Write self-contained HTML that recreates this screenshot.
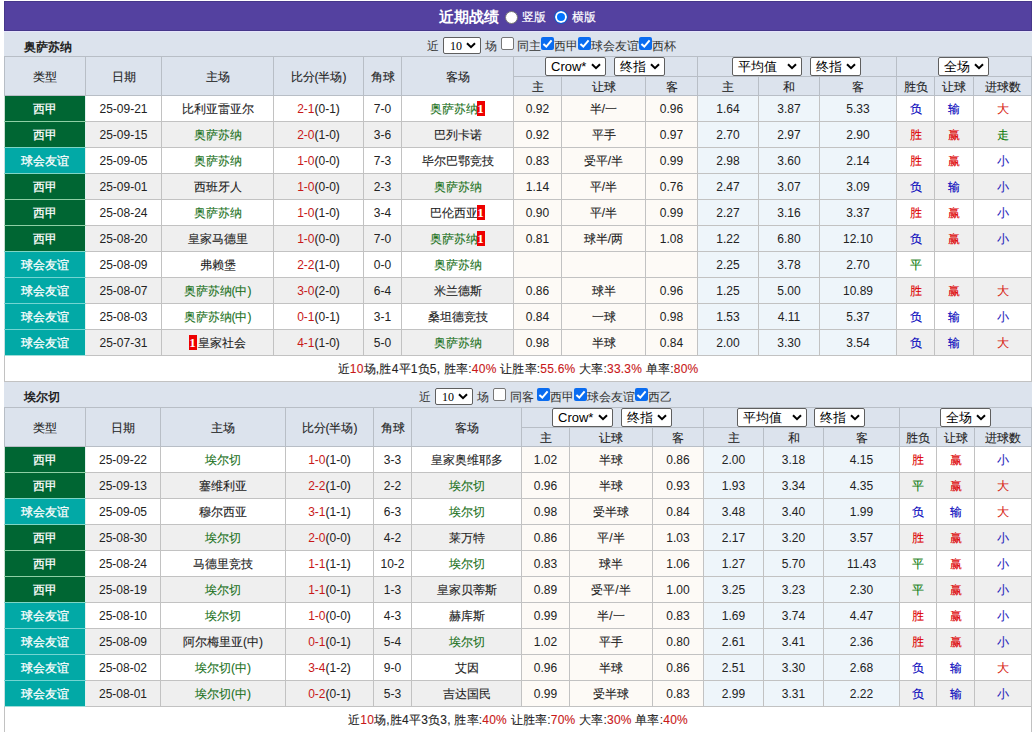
<!DOCTYPE html>
<html><head><meta charset="utf-8"><style>
*{box-sizing:border-box}
html,body{margin:0;padding:0;background:#fff;width:1036px;height:732px;overflow:hidden;position:relative;font-family:"Liberation Sans",sans-serif;font-size:12px;color:#222}
.title{position:absolute;z-index:2;left:4px;top:1px;width:1028px;height:30px;background:#5441a0;border:1px solid #46388a;color:#fff;white-space:nowrap}
.title:after{content:"";position:absolute;left:-1px;right:-1px;top:29px;height:1px;background:#e6e4fb}
.tt{position:absolute;left:434px;top:6px;font-weight:bold;font-size:15px;line-height:18px}
.rd{position:absolute;top:9px;width:13px;height:13px;border-radius:50%;background:#fff;border:1px solid #777}
.rd.r1{left:500px}
.rd.r2{left:549px;width:14px;height:14px;top:8px;background:#0075ff;border:1px solid #1158c8;box-shadow:inset 0 0 0 2px #fff}
.rl{position:absolute;top:8px;font-size:12px;line-height:15px;-webkit-text-stroke:0.2px #fff}
.rl.l1{left:517px}
.rl.l2{left:567px}
.bar{position:absolute;left:4px;width:1028px;height:26px;background:#dce3ed}
.tn{position:absolute;left:20px;top:10px;font-weight:bold;font-size:12px;line-height:13px;color:#222}
.ct{position:absolute;font-size:12px;line-height:14px;color:#333;white-space:nowrap}
.cb{position:absolute;width:13px;height:13px;border:1px solid #767676;border-radius:2px;background:#fff}
.cb.on{background:#0a6cf0;border-color:#0a6cf0}
.cb.on{border:0}.cb svg{position:absolute;left:0;top:0}
.s{position:absolute;border:1px solid #6f6f6f;border-radius:2px;background:#fff;font-size:13px;line-height:18px;text-align:left;padding-left:5px;color:#000;white-space:nowrap;border-color:#5f5f5f}
.s .chev{position:absolute;right:4px;top:5px}
.s5{font-family:"Liberation Serif",serif;font-size:12px;line-height:15px;padding-left:6px;padding-top:1px}
.s5 .chev{top:4px}
table.t{position:absolute;left:4px;width:1027px;border-collapse:collapse;table-layout:fixed}
.t td,.t th{border:1px solid #c2c2c2;text-align:center;padding:0;font-weight:normal;white-space:nowrap;overflow:hidden}
.t th{background:#dce3ed;color:#222;border-color:#b8bec6}
.t tr.h1{height:20px}
.t tr.h2{height:19px}
.t tr.od,.t tr.ev{height:26px}
.t tr.od td,.t tr.ev td{padding-top:1px}
.t tr.od td{background:#fff}
.t tr.ev td{background:#efefef}
.t td.xj{background:#006633!important;color:#fff;border-right-color:#e0f2ef;border-left-color:#c8dcd0}
.t td.yy{background:#02a9a6!important;color:#fff;border-right-color:#e0f2ef;border-left-color:#c8e0e0}
.t td.cr{background:#fdfaf6!important}
.t td.av{background:#eef5fa!important}
.t td.win{color:#dd0000}
.t td.lose{color:#0000bb}
.t td.draw{color:#0a7a0a}
.t td.big{color:#d81a10}
.t td.small{color:#2222bb}
.gt{color:#187018}
.sc{color:#c81818}
.rc{display:inline-block;background:#e00;color:#fff;font-weight:bold;width:8px;height:15px;line-height:15px;font-size:13px;text-align:center;vertical-align:middle;font-family:"Liberation Serif",serif;position:relative;left:-1px;top:-1px}
.t tr.sum{height:26px}
.t tr.sum td{background:#fff;padding-top:1px}
em{font-style:normal;color:#c81818}
.t td{-webkit-text-stroke:0.1px currentColor}
.n{font-style:normal;-webkit-text-stroke:0}
.t tr.sum td{letter-spacing:0.22px}
.t tr.h2 th{padding-top:2px}
.t tr.h1 th[rowspan]{padding-top:2px}
.t th{-webkit-text-stroke:0.1px currentColor;line-height:15px}
.t td.xj,.t td.yy{-webkit-text-stroke:0.25px #fff}

</style></head><body>
<div class="title"><span class="tt">近期战绩</span><span class="rd r1"></span><span class="rl l1">竖版</span><span class="rd r2"></span><span class="rl l2">横版</span></div>
<div class="bar" style="top:31px"><span class="tn">奥萨苏纳</span></div>
<span class="ct" style="left:427px;top:39px">近</span>
<span class="s s5" style="left:443px;top:37px;width:38px;height:17px">10<svg class="chev" width="10" height="7" viewBox="0 0 10 7"><path d="M1 1.2 L5 5.2 L9 1.2" fill="none" stroke="#000" stroke-width="2"/></svg></span>
<span class="ct" style="left:485px;top:39px">场</span>
<span class="cb" style="left:501px;top:37px"></span>
<span class="ct" style="left:517px;top:39px">同主</span>
<span class="cb on" style="left:541px;top:37px"><svg width="13" height="13" viewBox="0 0 13 13"><path d="M2.4 7 L5.3 9.6 L10.6 3.4" fill="none" stroke="#fff" stroke-width="2"/></svg></span>
<span class="ct" style="left:554px;top:39px">西甲</span>
<span class="cb on" style="left:578px;top:37px"><svg width="13" height="13" viewBox="0 0 13 13"><path d="M2.4 7 L5.3 9.6 L10.6 3.4" fill="none" stroke="#fff" stroke-width="2"/></svg></span>
<span class="ct" style="left:591px;top:39px">球会友谊</span>
<span class="cb on" style="left:639px;top:37px"><svg width="13" height="13" viewBox="0 0 13 13"><path d="M2.4 7 L5.3 9.6 L10.6 3.4" fill="none" stroke="#fff" stroke-width="2"/></svg></span>
<span class="ct" style="left:652px;top:39px">西杯</span>
<table class="t" style="top:56px">
<colgroup><col style="width:81px"><col style="width:76px"><col style="width:112px"><col style="width:90px"><col style="width:38px"><col style="width:112px"><col style="width:48px"><col style="width:84px"><col style="width:52px"><col style="width:61px"><col style="width:61px"><col style="width:77px"><col style="width:38px"><col style="width:39px"><col style="width:58px"></colgroup>
<tr class="h1"><th rowspan="2">类型</th><th rowspan="2">日期</th><th rowspan="2">主场</th><th rowspan="2">比分(半场)</th><th rowspan="2">角球</th><th rowspan="2">客场</th><th colspan="3"></th><th colspan="3"></th><th colspan="3"></th></tr>
<tr class="h2"><th>主</th><th>让球</th><th>客</th><th>主</th><th>和</th><th>客</th><th>胜负</th><th>让球</th><th>进球数</th></tr>
<tr class="od"><td class="xj" style="border-bottom-color:#8fcfa5">西甲</td><td><i class="n">25-09-21</i></td><td>比利亚雷亚尔</td><td><span class="sc"><i class="n">2-1</i></span>(<i class="n">0-1</i>)</td><td><i class="n">7-0</i></td><td><span class="gt">奥萨苏纳<b class="rc"><i class="n">1</i></b></span></td><td class="cr"><i class="n">0.92</i></td><td class="cr">半/一</td><td class="cr"><i class="n">0.96</i></td><td class="av"><i class="n">1.64</i></td><td class="av"><i class="n">3.87</i></td><td class="av"><i class="n">5.33</i></td><td class="lose">负</td><td class="lose">输</td><td class="big">大</td></tr>
<tr class="ev"><td class="xj" style="border-bottom-color:#7fd5c5">西甲</td><td><i class="n">25-09-15</i></td><td><span class="gt">奥萨苏纳</span></td><td><span class="sc"><i class="n">2-0</i></span>(<i class="n">1-0</i>)</td><td><i class="n">3-6</i></td><td>巴列卡诺</td><td class="cr"><i class="n">0.92</i></td><td class="cr">平手</td><td class="cr"><i class="n">0.97</i></td><td class="av"><i class="n">2.70</i></td><td class="av"><i class="n">2.97</i></td><td class="av"><i class="n">2.90</i></td><td class="win">胜</td><td class="win">赢</td><td class="draw">走</td></tr>
<tr class="od"><td class="yy" style="border-bottom-color:#7fd5c5">球会友谊</td><td><i class="n">25-09-05</i></td><td><span class="gt">奥萨苏纳</span></td><td><span class="sc"><i class="n">1-0</i></span>(<i class="n">0-0</i>)</td><td><i class="n">7-3</i></td><td>毕尔巴鄂竞技</td><td class="cr"><i class="n">0.83</i></td><td class="cr">受平/半</td><td class="cr"><i class="n">0.99</i></td><td class="av"><i class="n">2.98</i></td><td class="av"><i class="n">3.60</i></td><td class="av"><i class="n">2.14</i></td><td class="win">胜</td><td class="win">赢</td><td class="small">小</td></tr>
<tr class="ev"><td class="xj" style="border-bottom-color:#8fcfa5">西甲</td><td><i class="n">25-09-01</i></td><td>西班牙人</td><td><span class="sc"><i class="n">1-0</i></span>(<i class="n">0-0</i>)</td><td><i class="n">2-3</i></td><td><span class="gt">奥萨苏纳</span></td><td class="cr"><i class="n">1.14</i></td><td class="cr">平/半</td><td class="cr"><i class="n">0.76</i></td><td class="av"><i class="n">2.47</i></td><td class="av"><i class="n">3.07</i></td><td class="av"><i class="n">3.09</i></td><td class="lose">负</td><td class="lose">输</td><td class="small">小</td></tr>
<tr class="od"><td class="xj" style="border-bottom-color:#8fcfa5">西甲</td><td><i class="n">25-08-24</i></td><td><span class="gt">奥萨苏纳</span></td><td><span class="sc"><i class="n">1-0</i></span>(<i class="n">1-0</i>)</td><td><i class="n">3-4</i></td><td>巴伦西亚<b class="rc"><i class="n">1</i></b></td><td class="cr"><i class="n">0.90</i></td><td class="cr">平/半</td><td class="cr"><i class="n">0.99</i></td><td class="av"><i class="n">2.27</i></td><td class="av"><i class="n">3.16</i></td><td class="av"><i class="n">3.37</i></td><td class="win">胜</td><td class="win">赢</td><td class="small">小</td></tr>
<tr class="ev"><td class="xj" style="border-bottom-color:#7fd5c5">西甲</td><td><i class="n">25-08-20</i></td><td>皇家马德里</td><td><span class="sc"><i class="n">1-0</i></span>(<i class="n">0-0</i>)</td><td><i class="n">7-0</i></td><td><span class="gt">奥萨苏纳<b class="rc"><i class="n">1</i></b></span></td><td class="cr"><i class="n">0.81</i></td><td class="cr">球半/两</td><td class="cr"><i class="n">1.08</i></td><td class="av"><i class="n">1.22</i></td><td class="av"><i class="n">6.80</i></td><td class="av"><i class="n">12.10</i></td><td class="lose">负</td><td class="win">赢</td><td class="small">小</td></tr>
<tr class="od"><td class="yy" style="border-bottom-color:#73d5d2">球会友谊</td><td><i class="n">25-08-09</i></td><td>弗赖堡</td><td><span class="sc"><i class="n">2-2</i></span>(<i class="n">1-0</i>)</td><td><i class="n">0-0</i></td><td><span class="gt">奥萨苏纳</span></td><td class="cr"></td><td class="cr"></td><td class="cr"></td><td class="av"><i class="n">2.25</i></td><td class="av"><i class="n">3.78</i></td><td class="av"><i class="n">2.70</i></td><td class="draw">平</td><td class=""></td><td class=""></td></tr>
<tr class="ev"><td class="yy" style="border-bottom-color:#73d5d2">球会友谊</td><td><i class="n">25-08-07</i></td><td><span class="gt">奥萨苏纳(中)</span></td><td><span class="sc"><i class="n">3-0</i></span>(<i class="n">2-0</i>)</td><td><i class="n">6-4</i></td><td>米兰德斯</td><td class="cr"><i class="n">0.86</i></td><td class="cr">球半</td><td class="cr"><i class="n">0.96</i></td><td class="av"><i class="n">1.25</i></td><td class="av"><i class="n">5.00</i></td><td class="av"><i class="n">10.89</i></td><td class="win">胜</td><td class="win">赢</td><td class="big">大</td></tr>
<tr class="od"><td class="yy" style="border-bottom-color:#73d5d2">球会友谊</td><td><i class="n">25-08-03</i></td><td><span class="gt">奥萨苏纳(中)</span></td><td><span class="sc"><i class="n">0-1</i></span>(<i class="n">0-1</i>)</td><td><i class="n">3-1</i></td><td>桑坦德竞技</td><td class="cr"><i class="n">0.84</i></td><td class="cr">一球</td><td class="cr"><i class="n">0.98</i></td><td class="av"><i class="n">1.53</i></td><td class="av"><i class="n">4.11</i></td><td class="av"><i class="n">5.37</i></td><td class="lose">负</td><td class="lose">输</td><td class="small">小</td></tr>
<tr class="ev"><td class="yy" style="border-bottom-color:#a0dcd8">球会友谊</td><td><i class="n">25-07-31</i></td><td><b class="rc"><i class="n">1</i></b>皇家社会</td><td><span class="sc"><i class="n">4-1</i></span>(<i class="n">1-0</i>)</td><td><i class="n">5-0</i></td><td><span class="gt">奥萨苏纳</span></td><td class="cr"><i class="n">0.98</i></td><td class="cr">半球</td><td class="cr"><i class="n">0.84</i></td><td class="av"><i class="n">2.00</i></td><td class="av"><i class="n">3.30</i></td><td class="av"><i class="n">3.54</i></td><td class="lose">负</td><td class="lose">输</td><td class="big">大</td></tr>
<tr class="sum"><td colspan="15">近<em>10</em>场,胜4平1负5, 胜率:<em>40%</em> 让胜率:<em>55.6%</em> 大率:<em>33.3%</em> 单率:<em>80%</em></td></tr>
</table>
<span class="s " style="left:545px;top:57px;width:61px;height:19px">Crow*<svg class="chev" width="10" height="7" viewBox="0 0 10 7"><path d="M1 1.2 L5 5.2 L9 1.2" fill="none" stroke="#000" stroke-width="2"/></svg></span>
<span class="s " style="left:614px;top:57px;width:51px;height:19px">终指<svg class="chev" width="10" height="7" viewBox="0 0 10 7"><path d="M1 1.2 L5 5.2 L9 1.2" fill="none" stroke="#000" stroke-width="2"/></svg></span>
<span class="s " style="left:732px;top:57px;width:70px;height:19px">平均值<svg class="chev" width="10" height="7" viewBox="0 0 10 7"><path d="M1 1.2 L5 5.2 L9 1.2" fill="none" stroke="#000" stroke-width="2"/></svg></span>
<span class="s " style="left:810px;top:57px;width:51px;height:19px">终指<svg class="chev" width="10" height="7" viewBox="0 0 10 7"><path d="M1 1.2 L5 5.2 L9 1.2" fill="none" stroke="#000" stroke-width="2"/></svg></span>
<span class="s " style="left:938px;top:57px;width:51px;height:19px">全场<svg class="chev" width="10" height="7" viewBox="0 0 10 7"><path d="M1 1.2 L5 5.2 L9 1.2" fill="none" stroke="#000" stroke-width="2"/></svg></span>
<div class="bar" style="top:382px"><span class="tn" style="top:9px">埃尔切</span></div>
<span class="ct" style="left:419px;top:390px">近</span>
<span class="s s5" style="left:435px;top:388px;width:38px;height:17px">10<svg class="chev" width="10" height="7" viewBox="0 0 10 7"><path d="M1 1.2 L5 5.2 L9 1.2" fill="none" stroke="#000" stroke-width="2"/></svg></span>
<span class="ct" style="left:477px;top:390px">场</span>
<span class="cb" style="left:493px;top:388px"></span>
<span class="ct" style="left:510px;top:390px">同客</span>
<span class="cb on" style="left:537px;top:388px"><svg width="13" height="13" viewBox="0 0 13 13"><path d="M2.4 7 L5.3 9.6 L10.6 3.4" fill="none" stroke="#fff" stroke-width="2"/></svg></span>
<span class="ct" style="left:550px;top:390px">西甲</span>
<span class="cb on" style="left:574px;top:388px"><svg width="13" height="13" viewBox="0 0 13 13"><path d="M2.4 7 L5.3 9.6 L10.6 3.4" fill="none" stroke="#fff" stroke-width="2"/></svg></span>
<span class="ct" style="left:587px;top:390px">球会友谊</span>
<span class="cb on" style="left:635px;top:388px"><svg width="13" height="13" viewBox="0 0 13 13"><path d="M2.4 7 L5.3 9.6 L10.6 3.4" fill="none" stroke="#fff" stroke-width="2"/></svg></span>
<span class="ct" style="left:648px;top:390px">西乙</span>
<table class="t" style="top:407px">
<colgroup><col style="width:81px"><col style="width:75px"><col style="width:125px"><col style="width:88px"><col style="width:38px"><col style="width:110px"><col style="width:48px"><col style="width:83px"><col style="width:51px"><col style="width:60px"><col style="width:60px"><col style="width:76px"><col style="width:37px"><col style="width:38px"><col style="width:57px"></colgroup>
<tr class="h1"><th rowspan="2">类型</th><th rowspan="2">日期</th><th rowspan="2">主场</th><th rowspan="2">比分(半场)</th><th rowspan="2">角球</th><th rowspan="2">客场</th><th colspan="3"></th><th colspan="3"></th><th colspan="3"></th></tr>
<tr class="h2"><th>主</th><th>让球</th><th>客</th><th>主</th><th>和</th><th>客</th><th>胜负</th><th>让球</th><th>进球数</th></tr>
<tr class="od"><td class="xj" style="border-bottom-color:#8fcfa5">西甲</td><td><i class="n">25-09-22</i></td><td><span class="gt">埃尔切</span></td><td><span class="sc"><i class="n">1-0</i></span>(<i class="n">1-0</i>)</td><td><i class="n">3-3</i></td><td>皇家奥维耶多</td><td class="cr"><i class="n">1.02</i></td><td class="cr">半球</td><td class="cr"><i class="n">0.86</i></td><td class="av"><i class="n">2.00</i></td><td class="av"><i class="n">3.18</i></td><td class="av"><i class="n">4.15</i></td><td class="win">胜</td><td class="win">赢</td><td class="small">小</td></tr>
<tr class="ev"><td class="xj" style="border-bottom-color:#7fd5c5">西甲</td><td><i class="n">25-09-13</i></td><td>塞维利亚</td><td><span class="sc"><i class="n">2-2</i></span>(<i class="n">1-0</i>)</td><td><i class="n">2-2</i></td><td><span class="gt">埃尔切</span></td><td class="cr"><i class="n">0.96</i></td><td class="cr">半球</td><td class="cr"><i class="n">0.93</i></td><td class="av"><i class="n">1.93</i></td><td class="av"><i class="n">3.34</i></td><td class="av"><i class="n">4.35</i></td><td class="draw">平</td><td class="win">赢</td><td class="big">大</td></tr>
<tr class="od"><td class="yy" style="border-bottom-color:#7fd5c5">球会友谊</td><td><i class="n">25-09-05</i></td><td>穆尔西亚</td><td><span class="sc"><i class="n">3-1</i></span>(<i class="n">1-1</i>)</td><td><i class="n">6-3</i></td><td><span class="gt">埃尔切</span></td><td class="cr"><i class="n">0.98</i></td><td class="cr">受半球</td><td class="cr"><i class="n">0.84</i></td><td class="av"><i class="n">3.48</i></td><td class="av"><i class="n">3.40</i></td><td class="av"><i class="n">1.99</i></td><td class="lose">负</td><td class="lose">输</td><td class="big">大</td></tr>
<tr class="ev"><td class="xj" style="border-bottom-color:#8fcfa5">西甲</td><td><i class="n">25-08-30</i></td><td><span class="gt">埃尔切</span></td><td><span class="sc"><i class="n">2-0</i></span>(<i class="n">0-0</i>)</td><td><i class="n">4-2</i></td><td>莱万特</td><td class="cr"><i class="n">0.86</i></td><td class="cr">平/半</td><td class="cr"><i class="n">1.03</i></td><td class="av"><i class="n">2.17</i></td><td class="av"><i class="n">3.20</i></td><td class="av"><i class="n">3.57</i></td><td class="win">胜</td><td class="win">赢</td><td class="small">小</td></tr>
<tr class="od"><td class="xj" style="border-bottom-color:#8fcfa5">西甲</td><td><i class="n">25-08-24</i></td><td>马德里竞技</td><td><span class="sc"><i class="n">1-1</i></span>(<i class="n">1-1</i>)</td><td><i class="n">10-2</i></td><td><span class="gt">埃尔切</span></td><td class="cr"><i class="n">0.83</i></td><td class="cr">球半</td><td class="cr"><i class="n">1.06</i></td><td class="av"><i class="n">1.27</i></td><td class="av"><i class="n">5.70</i></td><td class="av"><i class="n">11.43</i></td><td class="draw">平</td><td class="win">赢</td><td class="small">小</td></tr>
<tr class="ev"><td class="xj" style="border-bottom-color:#7fd5c5">西甲</td><td><i class="n">25-08-19</i></td><td><span class="gt">埃尔切</span></td><td><span class="sc"><i class="n">1-1</i></span>(<i class="n">0-1</i>)</td><td><i class="n">1-3</i></td><td>皇家贝蒂斯</td><td class="cr"><i class="n">0.89</i></td><td class="cr">受平/半</td><td class="cr"><i class="n">1.00</i></td><td class="av"><i class="n">3.25</i></td><td class="av"><i class="n">3.23</i></td><td class="av"><i class="n">2.30</i></td><td class="draw">平</td><td class="win">赢</td><td class="small">小</td></tr>
<tr class="od"><td class="yy" style="border-bottom-color:#73d5d2">球会友谊</td><td><i class="n">25-08-10</i></td><td><span class="gt">埃尔切</span></td><td><span class="sc"><i class="n">1-0</i></span>(<i class="n">0-0</i>)</td><td><i class="n">4-3</i></td><td>赫库斯</td><td class="cr"><i class="n">0.99</i></td><td class="cr">半/一</td><td class="cr"><i class="n">0.83</i></td><td class="av"><i class="n">1.69</i></td><td class="av"><i class="n">3.74</i></td><td class="av"><i class="n">4.47</i></td><td class="win">胜</td><td class="win">赢</td><td class="small">小</td></tr>
<tr class="ev"><td class="yy" style="border-bottom-color:#73d5d2">球会友谊</td><td><i class="n">25-08-09</i></td><td>阿尔梅里亚(中)</td><td><span class="sc"><i class="n">0-1</i></span>(<i class="n">0-1</i>)</td><td><i class="n">5-4</i></td><td><span class="gt">埃尔切</span></td><td class="cr"><i class="n">1.02</i></td><td class="cr">平手</td><td class="cr"><i class="n">0.80</i></td><td class="av"><i class="n">2.61</i></td><td class="av"><i class="n">3.41</i></td><td class="av"><i class="n">2.36</i></td><td class="win">胜</td><td class="win">赢</td><td class="small">小</td></tr>
<tr class="od"><td class="yy" style="border-bottom-color:#73d5d2">球会友谊</td><td><i class="n">25-08-02</i></td><td><span class="gt">埃尔切(中)</span></td><td><span class="sc"><i class="n">3-4</i></span>(<i class="n">1-2</i>)</td><td><i class="n">9-0</i></td><td>艾因</td><td class="cr"><i class="n">0.96</i></td><td class="cr">半球</td><td class="cr"><i class="n">0.86</i></td><td class="av"><i class="n">2.51</i></td><td class="av"><i class="n">3.30</i></td><td class="av"><i class="n">2.68</i></td><td class="lose">负</td><td class="lose">输</td><td class="big">大</td></tr>
<tr class="ev"><td class="yy" style="border-bottom-color:#a0dcd8">球会友谊</td><td><i class="n">25-08-01</i></td><td><span class="gt">埃尔切(中)</span></td><td><span class="sc"><i class="n">0-2</i></span>(<i class="n">0-1</i>)</td><td><i class="n">5-3</i></td><td>吉达国民</td><td class="cr"><i class="n">0.99</i></td><td class="cr">受半球</td><td class="cr"><i class="n">0.83</i></td><td class="av"><i class="n">2.99</i></td><td class="av"><i class="n">3.31</i></td><td class="av"><i class="n">2.22</i></td><td class="lose">负</td><td class="lose">输</td><td class="small">小</td></tr>
<tr class="sum"><td colspan="15">近<em>10</em>场,胜4平3负3, 胜率:<em>40%</em> 让胜率:<em>70%</em> 大率:<em>30%</em> 单率:<em>40%</em></td></tr>
</table>
<span class="s " style="left:552px;top:408px;width:61px;height:19px">Crow*<svg class="chev" width="10" height="7" viewBox="0 0 10 7"><path d="M1 1.2 L5 5.2 L9 1.2" fill="none" stroke="#000" stroke-width="2"/></svg></span>
<span class="s " style="left:621px;top:408px;width:51px;height:19px">终指<svg class="chev" width="10" height="7" viewBox="0 0 10 7"><path d="M1 1.2 L5 5.2 L9 1.2" fill="none" stroke="#000" stroke-width="2"/></svg></span>
<span class="s " style="left:737px;top:408px;width:70px;height:19px">平均值<svg class="chev" width="10" height="7" viewBox="0 0 10 7"><path d="M1 1.2 L5 5.2 L9 1.2" fill="none" stroke="#000" stroke-width="2"/></svg></span>
<span class="s " style="left:814px;top:408px;width:51px;height:19px">终指<svg class="chev" width="10" height="7" viewBox="0 0 10 7"><path d="M1 1.2 L5 5.2 L9 1.2" fill="none" stroke="#000" stroke-width="2"/></svg></span>
<span class="s " style="left:940px;top:408px;width:51px;height:19px">全场<svg class="chev" width="10" height="7" viewBox="0 0 10 7"><path d="M1 1.2 L5 5.2 L9 1.2" fill="none" stroke="#000" stroke-width="2"/></svg></span>
</body></html>
